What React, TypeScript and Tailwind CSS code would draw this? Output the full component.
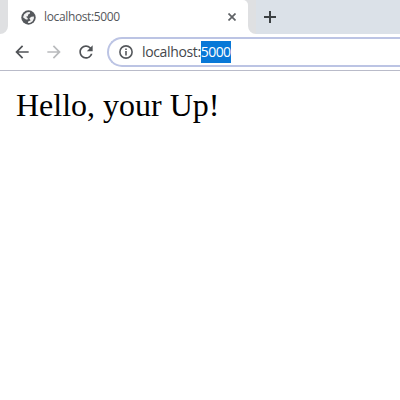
import React from 'react';
import { MdArrowBack, MdArrowForward, MdRefresh } from 'react-icons/md';

function Globe() {
  return (
    <svg className="ml-[13px] size-[15px]" viewBox="0 0 15 15">
      <circle cx="7.5" cy="7.5" r="7.2" fill="#55585c" />
      <path d="M2 7.2 3.2 4.2 6 2.2 8.8 2.1 9 3.6 7.2 4.6 6.8 6.2 5 6.8 6.8 8.2 6.4 9.8 4.6 9.2Z" fill="#f0f0f0" />
      <path d="M8.4 8.2 10.4 6.8 12.9 6.6 12.9 8.6 11.6 11.3 9 13 6.8 13.1 7.4 11.3 9.6 10.4Z" fill="#f0f0f0" />
    </svg>
  );
}

function Tab() {
  return (
    <div className="relative ml-2 flex h-[34px] w-60 items-center rounded-tr-[5px] bg-white">
      <svg className="absolute bottom-0 -left-2 h-2 w-2" viewBox="0 0 8 8">
        <path d="M8 0A8 8 0 0 1 0 8H8Z" fill="#fff" />
      </svg>
      <svg className="absolute -right-2 bottom-0 h-2 w-2" viewBox="0 0 8 8">
        <path d="M0 0A8 8 0 0 0 8 8H0Z" fill="#fff" />
      </svg>
      <Globe />
      <span className="ml-2 flex-1 text-[12px] leading-4 tracking-[-0.36px] text-[#55575b]">localhost:5000</span>
      <svg className="mr-3 size-2" viewBox="0 0 8 8" fill="none" stroke="#5f6266" strokeWidth="1.7">
        <path d="M.5.5 7.5 7.5M7.5.5.5 7.5" />
      </svg>
    </div>
  );
}

function Toolbar() {
  return (
    <div className="flex h-[37px] items-center border-b border-[#b9bbc9] bg-white">
      <MdArrowBack className="ml-3 size-5 text-[#505357]" />
      <MdArrowForward className="ml-3 size-5 text-[#b9bbbd]" />
      <MdRefresh className="ml-3 size-5 text-[#505357]" />
      <div className="ml-[11px] flex h-[30px] flex-1 items-center rounded-l-full border-2 border-r-0 border-[#bcc4e4] bg-white">
        <svg className="ml-[10px] size-[14px]" viewBox="0 0 14 14" fill="none" stroke="#55585c" strokeWidth="1.6">
          <circle cx="7" cy="7" r="6.1" />
          <path d="M7 6V10.5M7 3.4V5" />
        </svg>
        <span className="ml-[9px] flex items-center text-[14px] leading-[22px] tracking-[-0.36px] text-[#45474b]">
          <span>localhost:</span>
          <span className="w-[30px] bg-[#0878d7] tracking-[-0.55px] text-white">5000</span>
        </span>
      </div>
    </div>
  );
}

export default function App() {
  return (
    <div className="h-[400px] w-[400px] overflow-hidden bg-white font-['Open_Sans',sans-serif]">
      <div className="flex h-[34px] items-center bg-[#dbe1e8]">
        <div className="flex w-64 bg-[#dfe0e2]">
          <Tab />
        </div>
        <svg className="ml-2 size-3" viewBox="0 0 12 12" fill="none" stroke="#3c4043" strokeWidth="2">
          <path d="M6 0V12M0 6H12" />
        </svg>
      </div>
      <Toolbar />
      <h1 className="pt-4 pl-4 font-['Liberation_Serif',serif] text-[32px] leading-[37px] text-black">Hello, your Up!</h1>
    </div>
  );
}
